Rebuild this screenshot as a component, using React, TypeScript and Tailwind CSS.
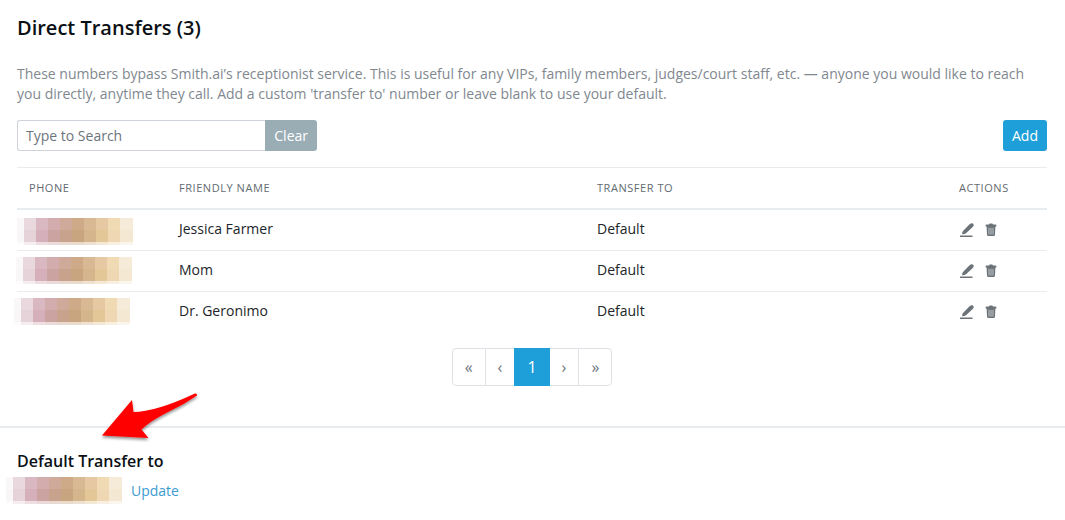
import React, { useState } from "react";

const transfers = [
    { id: 1, name: 'Jessica Farmer', to: 'Default', x: 4, y: 3 },
    { id: 2, name: 'Mom', to: 'Default', x: 3, y: 1 },
    { id: 3, name: 'Dr. Geronimo', to: 'Default', x: 1, y: 1 },
];

const mosaic = [
    { y: 0, height: 12, opacity: 1, colors: ['#f9f7f8', '#e9d9de', '#d9b8c2', '#d3adae', '#cfaa9b', '#ceaa88', '#d9b993', '#e6c9a3', '#f0dab3', '#f5ebd8'] },
    { y: 12, height: 12, opacity: 1, colors: ['#f8f6f7', '#e6d3d9', '#d5afb9', '#cba3a0', '#c8a28d', '#c8a47f', '#d5b58b', '#e4c797', '#eed7b2', '#f4e8d3'] },
    { y: 24, height: 3, opacity: 0.4, colors: ['#f9f7f8', '#e6d3d9', '#d5afb9', '#cba3a0', '#c8a28d', '#c8a47f', '#d5b58b', '#e4c797', '#eed7b2', '#f4e8d3'] },
];

// hidden phone number
const MaskedPhone = ({ x = 0, y = 0 }: { x?: number; y?: number }) => (
    <svg width="120" height="30" viewBox="0 0 120 30" className="block" shapeRendering="crispEdges" role="img" aria-label="Hidden phone number">
        {mosaic.map((row) =>
            row.colors.map((color, i) => (
                <rect
                    key={`${row.y}-${i}`}
                    x={i === 0 ? x : x + 7 + (i - 1) * 12}
                    y={y + row.y}
                    width={i === 0 ? 7 : i === 9 ? 13 : 12}
                    height={row.height}
                    fill={color}
                    opacity={row.opacity}
                />
            ))
        )}
    </svg>
);

const EditIcon = () => (
    <svg width="16" height="16" viewBox="0 0 16 16" fill="#6b7378" aria-hidden="true">
        <path d="M1 13.500h12.500v1.500H1z" />
        <path d="M3.200 12.300q-.3-1.800.8-3.300L10.300 2.600q1.600-1.500 3.200-1.300 1.900.9 1 2.700-.3.600-.8 1.100L7.300 11q-1.800 1.500-4.100 1.300z" />
    </svg>
);

const TrashIcon = () => (
    <svg width="16" height="16" viewBox="0 0 16 16" fill="#6b7378" aria-hidden="true">
        <path d="M2.600 3.400q0-.9 1-.9H6q.2-.9 1-.9h2q.8 0 1 .9h2.400q1 0 1 .9v1H2.600z" />
        <path d="M3.600 4h8.800l-.4 8.800q-.1 1.200-1.300 1.200H5.300q-1.200 0-1.300-1.200z" />
        <path d="M6 5.800v6.800M8 5.800v6.800M10 5.800v6.800" stroke="#c3c7c9" strokeWidth="1" />
    </svg>
);

const App = () => {
    const [search, setSearch] = useState<string>('');

    const filtered = transfers.filter((item) => item.name.toLowerCase().includes(search.toLowerCase()));

    return (
        <main className="bg-white font-['Open_Sans','Noto_Sans',sans-serif] text-sm text-[#212529]">
            <section className="border-b-2 border-[#e9ecef] pt-4 pr-[18px] pb-10 pl-[17px]">
                <h1 className="text-xl leading-6 font-semibold text-[#0b1015]">Direct Transfers (3)</h1>
                <p className="mt-6 leading-5 text-[#7f888f]">
                    These numbers bypass Smith.ai’s receptionist service. This is useful for any VIPs, family members, judges/court staff, etc. — anyone you would like to reach you directly, anytime they call. Add a custom 'transfer to' number or leave blank to use your default.
                </p>

                <div className="mt-4 flex items-center justify-between">
                    <div className="flex h-[31px] w-[300px]">
                        <input
                            type="text"
                            aria-label="Search transfers"
                            placeholder="Type to Search"
                            className="min-w-0 flex-1 rounded-l-[3px] border border-r-0 border-[#ced4da] px-2 placeholder:text-[#6c757d] focus:outline-none"
                            value={search}
                            onChange={(e) => setSearch(e.target.value)}
                        />
                        <button type="button" className="rounded-r-[3px] bg-[#9aadb5] px-[9px] text-white" onClick={() => setSearch('')}>Clear</button>
                    </div>
                    <button type="button" className="h-[31px] rounded-[3px] bg-[#1f9fd9] px-[9px] text-white">Add</button>
                </div>

                <table className="mt-4 w-full table-fixed border-separate border-spacing-0 text-left">
                    <thead>
                        <tr className="h-[43px] text-[11px] tracking-wider text-[#636b70] uppercase *:border-t *:border-b-2 *:border-[#e9ecef] *:px-3 *:py-0 *:font-normal">
                            <th className="w-[150px]">Phone</th>
                            <th>Friendly Name</th>
                            <th className="w-[362px]">Transfer To</th>
                            <th className="w-[100px]">Actions</th>
                        </tr>
                    </thead>
                    <tbody>
                        {filtered.map((item) => (
                            <tr key={item.id} className="h-[41px] *:border-b *:border-[#e9ecef] last:*:border-transparent">
                                <td>
                                    <div className="-ml-1"><MaskedPhone x={item.x} y={item.y} /></div>
                                </td>
                                <td className="px-3 pb-0.5">{item.name}</td>
                                <td className="px-3 pb-0.5">{item.to}</td>
                                <td className="px-3">
                                    <div className="flex gap-2">
                                        <button type="button" aria-label={`Edit ${item.name}`}><EditIcon /></button>
                                        <button type="button" aria-label={`Delete ${item.name}`}><TrashIcon /></button>
                                    </div>
                                </td>
                            </tr>
                        ))}
                    </tbody>
                </table>

                <nav aria-label="Pagination" className="mt-[15px] flex justify-center">
                    <div className="flex h-[38px] text-base text-[#6c757d]">
                        <button type="button" aria-label="First page" className="rounded-l border border-[#dee2e6] px-3">«</button>
                        <button type="button" aria-label="Previous page" className="border-y border-[#dee2e6] px-3">‹</button>
                        <button type="button" aria-current="page" className="bg-[#1f9fd9] px-[13px] text-white">1</button>
                        <button type="button" aria-label="Next page" className="border-y border-[#dee2e6] px-3">›</button>
                        <button type="button" aria-label="Last page" className="rounded-r border border-[#dee2e6] px-3">»</button>
                    </div>
                </nav>
            </section>

            <section className="relative pt-[21px] pb-4 pl-[17px]">
                <svg className="absolute -top-10 left-[96px]" width="108" height="56" viewBox="0 0 108 56" aria-hidden="true">
                    <defs>
                        <filter id="shadow" x="-20%" y="-20%" width="140%" height="150%">
                            <feDropShadow dx="0" dy="2" stdDeviation="1.5" floodColor="#000" floodOpacity=".45" />
                        </filter>
                    </defs>
                    <path
                        filter="url(#shadow)"
                        fill="#fe0000"
                        d="M6 47.500L36 12l1.500 12q22 0 61.500-18.500 2.500-.3 2 2Q88 16.500 74 23 54 33 45.500 41.500L52.500 50z"
                    />
                </svg>
                <h2 className="text-base leading-6 font-semibold text-[#0b1015]">Default Transfer to</h2>
                <div className="mt-px -ml-[11px] flex items-center gap-[5px]">
                    <MaskedPhone y={3} />
                    <a href="#" className="pt-1 text-[#3c9bd0]">Update</a>
                </div>
            </section>
        </main>
    );
};

export default App;
